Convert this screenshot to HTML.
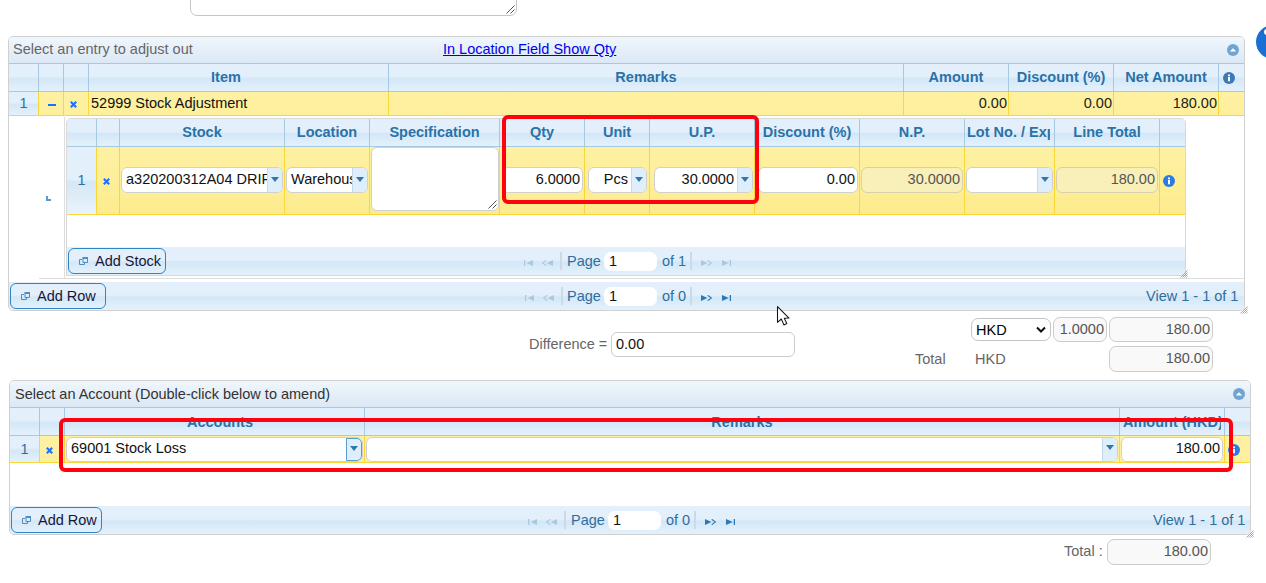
<!DOCTYPE html>
<html>
<head>
<meta charset="utf-8">
<title>Stock Adjustment</title>
<style>
*{box-sizing:border-box;margin:0;padding:0}
html,body{width:1266px;height:583px;overflow:hidden;background:#fff}
body{font-family:"Liberation Sans",sans-serif;font-size:14.5px;color:#222;position:relative}
.a{position:absolute}
.glass{background:linear-gradient(to bottom,#e3f0fb 0,#e3f0fb 46%,#d4e7f7 54%,#e3f1fc 100%)}
.title{background:linear-gradient(to bottom,#f0f6fc 0,#dbe8f5 100%);border-bottom:1px solid #a6c9e2;color:#666}
.hc{position:absolute;top:0;height:28px;border-right:1px solid #a6c9e2;color:#2a72a8;font-weight:bold;text-align:center;line-height:27px;white-space:nowrap;overflow:hidden}
.yc{position:absolute;top:0;background:#fce982 linear-gradient(to bottom,#fef1a3,#fce982) 0 0/100% 100px no-repeat;border-right:1px solid #f9d73a;border-bottom:1px solid #f9d73a;white-space:nowrap;overflow:hidden}
.inp{position:absolute;background:#fff;border:1px solid #d0d0d0;border-radius:6px;height:26px;line-height:22px;white-space:nowrap;overflow:hidden;color:#111}
.dis{background:#f8efb9;border-color:#d6d0b0;color:#555}
.dd{position:absolute;right:0;top:0;bottom:0;width:15px;background:#dfeefb;border-left:1px solid #c5dbec}
.dd:after{content:"";position:absolute;left:3px;top:9px;border-left:4px solid transparent;border-right:4px solid transparent;border-top:5px solid #2e78b0}
.r{text-align:right}
.pg{color:#2e6e9e}
.btn{position:absolute;border:1px solid #2e86c8;border-radius:6px;background:linear-gradient(to bottom,#e3f0fb 0,#e3f0fb 46%,#d4e7f7 54%,#e3f1fc 100%);color:#16163a;height:26px;line-height:24px;white-space:nowrap}
.red{position:absolute;border:4px solid #fe0210;border-radius:6px}
.gin{position:absolute;background:#f9f9f9;border:1px solid #ccc;border-radius:7px;height:25px;line-height:23px;color:#555;text-align:right;padding-right:4px}

.ic{position:absolute}
.sep{position:absolute;width:2px;height:18px;background:#ccd9e6}
.pin{position:absolute;background:#fff;border-radius:7px;height:19px;width:53px;line-height:19px;padding-left:5px;color:#111}
#g2 .dd:after{top:7px}
</style>
</head>
<body>
<!-- top textarea -->
<div class="a" style="left:190px;top:-20px;width:327px;height:36px;border:1px solid #c6c6c6;border-radius:7px;background:#fff"><svg class="ic" style="right:1px;bottom:1px" width="9" height="9"><path d="M8.5 0.5l-8 8M8.5 4.5l-4 4" stroke="#555" stroke-width="1" fill="none"/></svg></div>

<!-- GRID 1 -->
<div id="g1" class="a" style="left:8px;top:36px;width:1237px;height:275px;border:1px solid #d0d0d0;border-radius:5px;overflow:hidden;background:#fff">
  <div class="a title" style="left:0;top:0;width:1235px;height:27px;line-height:24px;padding-left:4px">Select an entry to adjust out</div>
  <div class="a" style="left:434px;top:0;line-height:24px;color:#0000ee;text-decoration:underline">In Location Field Show Qty</div>
  <!-- header -->
  <div class="a glass" style="left:0;top:27px;width:1235px;height:28px;border-bottom:1px solid #a6c9e2">
    <div class="hc" style="left:0;width:30px"></div>
    <div class="hc" style="left:30px;width:25px"></div>
    <div class="hc" style="left:55px;width:25px"></div>
    <div class="hc" style="left:80px;width:300px;padding-right:25px">Item</div>
    <div class="hc" style="left:380px;width:515px">Remarks</div>
    <div class="hc" style="left:895px;width:105px">Amount</div>
    <div class="hc" style="left:1000px;width:105px">Discount (%)</div>
    <div class="hc" style="left:1105px;width:105px">Net Amount</div>
    <div class="hc" style="left:1210px;width:25px;border-right:0"></div>
  </div>
  <!-- row -->
  <div class="a" style="left:0;top:55px;width:1235px;height:24px">
    <div class="yc pg" style="left:0;width:30px;height:24px;text-align:center;line-height:23px;background:linear-gradient(to bottom,#e3f0fb 0,#e3f0fb 46%,#d4e7f7 54%,#e3f1fc 100%)">1</div>
    <div class="yc" style="left:30px;width:25px;height:24px"></div>
    <div class="yc" style="left:55px;width:25px;height:24px"></div>
    <div class="yc" style="left:80px;width:300px;height:24px;line-height:23px;padding-left:2px;color:#111">52999 Stock Adjustment</div>
    <div class="yc" style="left:380px;width:515px;height:24px"></div>
    <div class="yc r" style="left:895px;width:105px;height:24px;line-height:23px;padding-right:1px">0.00</div>
    <div class="yc r" style="left:1000px;width:105px;height:24px;line-height:23px;padding-right:1px">0.00</div>
    <div class="yc r" style="left:1105px;width:105px;height:24px;line-height:23px;padding-right:1px">180.00</div>
    <div class="yc" style="left:1210px;width:25px;height:24px;border-right:0"></div>
  </div>

  <!-- subgrid row -->
  <div class="a" style="left:55px;top:80px;width:1px;height:162px;background:#ddd"></div>
  <div class="a" style="left:30px;top:241px;width:1205px;height:1px;background:#ddd"></div>
  <svg class="a" style="left:37px;top:159px" width="5" height="5"><path d="M1 0v4h4" fill="none" stroke="#5a9ad0" stroke-width="2"/></svg>
  <!-- subgrid -->
  <div id="sg" class="a" style="left:57px;top:81px;width:1120px;height:158px;border:1px solid #d8d8d8;border-radius:5px 5px 0 0;overflow:hidden;background:#fff">
    <div class="a glass" style="left:0;top:0;width:1118px;height:28px;border-bottom:1px solid #a6c9e2">
      <div class="hc" style="left:0;width:30px"></div>
      <div class="hc" style="left:30px;width:23px"></div>
      <div class="hc" style="left:53px;width:165px">Stock</div>
      <div class="hc" style="left:218px;width:85px">Location</div>
      <div class="hc" style="left:303px;width:130px">Specification</div>
      <div class="hc" style="left:433px;width:85px">Qty</div>
      <div class="hc" style="left:518px;width:65px">Unit</div>
      <div class="hc" style="left:583px;width:105px">U.P.</div>
      <div class="hc" style="left:688px;width:105px">Discount (%)</div>
      <div class="hc" style="left:793px;width:105px">N.P.</div>
      <div class="hc" style="left:898px;width:90px;text-align:left;padding-left:2px"><div style="width:83px;overflow:hidden">Lot No. / Expiry</div></div>
      <div class="hc" style="left:988px;width:105px">Line Total</div>
      <div class="hc" style="left:1093px;width:25px;border-right:0"></div>
    </div>
    <div class="a" style="left:0;top:28px;width:1118px;height:68px">
      <div class="yc pg" style="left:0;width:30px;height:68px;text-align:center;line-height:67px;background:linear-gradient(to bottom,#e3f0fb 0,#e3f0fb 48%,#d5e7f6 52%,#e9f3fc 100%)">1</div>
      <div class="yc" style="left:30px;width:23px;height:68px"></div>
      <div class="yc" style="left:53px;width:165px;height:68px"><div class="inp" style="left:1px;top:20px;width:162px;padding-left:4px">a320200312A04 DRIP<div class="dd"></div></div></div>
      <div class="yc" style="left:218px;width:85px;height:68px"><div class="inp" style="left:1px;top:20px;width:82px;padding-left:4px">Warehouse<div class="dd"></div></div></div>
      <div class="yc" style="left:303px;width:130px;height:68px"><div class="inp" style="left:1px;top:0;width:128px;height:64px;border-radius:6px"><svg class="ic" style="right:1px;bottom:1px" width="9" height="9"><path d="M8.5 0.5l-8 8M8.5 4.5l-4 4" stroke="#555" stroke-width="1" fill="none"/></svg></div></div>
      <div class="yc" style="left:433px;width:85px;height:68px"><div class="inp r" style="left:2px;top:20px;width:81px;padding-right:2px">6.0000</div></div>
      <div class="yc" style="left:518px;width:65px;height:68px"><div class="inp r" style="left:3px;top:20px;width:59px;padding-right:18px">Pcs<div class="dd"></div></div></div>
      <div class="yc" style="left:583px;width:105px;height:68px"><div class="inp r" style="left:4px;top:20px;width:99px;padding-right:18px">30.0000<div class="dd"></div></div></div>
      <div class="yc" style="left:688px;width:105px;height:68px"><div class="inp r" style="left:3px;top:20px;width:100px;padding-right:2px">0.00</div></div>
      <div class="yc" style="left:793px;width:105px;height:68px"><div class="inp r dis" style="left:1px;top:20px;width:102px;padding-right:2px">30.0000</div></div>
      <div class="yc" style="left:898px;width:90px;height:68px"><div class="inp" style="left:1px;top:20px;width:87px"><div class="dd"></div></div></div>
      <div class="yc" style="left:988px;width:105px;height:68px"><div class="inp r dis" style="left:1px;top:20px;width:102px;padding-right:2px">180.00</div></div>
      <div class="yc" style="left:1093px;width:25px;height:68px;border-right:0"></div>
    </div>
    <!-- subgrid pager -->
    <div class="a glass" style="left:0;top:128px;width:1118px;height:28px"></div>
  </div>
  <!-- main pager -->
  <div class="a glass" style="left:0;top:245px;width:1235px;height:28px"></div>
</div>

    <svg class="ic" style="left:524px;top:260px" width="10" height="6"><path d="M0 0h1.3v6H0zM9 0v6L2.5 3z" fill="#a9c9e3"/></svg>
    <svg class="ic" style="left:542px;top:260px" width="12" height="6"><path d="M11 0v6L4.6 3z" fill="#a9c9e3"/><path d="M4.3 0.3L0.6 3l3.7 2.7" fill="none" stroke="#a9c9e3" stroke-width="1.1"/></svg>
    <div class="sep" style="left:560px;top:252px"></div>
    <div class="a pg" style="left:567px;top:252px;line-height:19px">Page</div>
    <div class="pin" style="left:604px;top:252px">1</div>
    <div class="a pg" style="left:662px;top:252px;line-height:19px">of 1</div>
    <div class="sep" style="left:690px;top:252px"></div>
    <svg class="ic" style="left:701px;top:260px" width="12" height="6"><path d="M0 0v6L6.4 3z" fill="#a9c9e3"/><path d="M6.7 0.3L10.4 3l-3.7 2.7" fill="none" stroke="#a9c9e3" stroke-width="1.1"/></svg>
    <svg class="ic" style="left:722px;top:260px" width="10" height="6"><path d="M0 0v6L6.8 3z" fill="#a9c9e3"/><path d="M7.7 0H9v6H7.7z" fill="#a9c9e3"/></svg>

    <svg class="ic" style="left:525px;top:295px" width="10" height="6"><path d="M0 0h1.3v6H0zM9 0v6L2.5 3z" fill="#a9c9e3"/></svg>
    <svg class="ic" style="left:543px;top:295px" width="12" height="6"><path d="M11 0v6L4.6 3z" fill="#a9c9e3"/><path d="M4.3 0.3L0.6 3l3.7 2.7" fill="none" stroke="#a9c9e3" stroke-width="1.1"/></svg>
    <div class="sep" style="left:561px;top:287px"></div>
    <div class="a pg" style="left:567px;top:287px;line-height:19px">Page</div>
    <div class="pin" style="left:604px;top:287px">1</div>
    <div class="a pg" style="left:662px;top:287px;line-height:19px">of 0</div>
    <div class="sep" style="left:690px;top:287px"></div>
    <svg class="ic" style="left:701px;top:295px" width="12" height="6"><path d="M0 0v6L6.4 3z" fill="#2e78b4"/><path d="M6.7 0.3L10.4 3l-3.7 2.7" fill="none" stroke="#2e78b4" stroke-width="1.1"/></svg>
    <svg class="ic" style="left:722px;top:295px" width="10" height="6"><path d="M0 0v6L6.8 3z" fill="#2e78b4"/><path d="M7.7 0H9v6H7.7z" fill="#2e78b4"/></svg>

<!-- buttons -->
<div class="btn" style="left:68px;top:248px;width:98px;padding-left:26px">Add Stock</div>
<div class="btn" style="left:10px;top:283px;width:96px;padding-left:26px">Add Row</div>
<div class="a pg" style="left:1146px;top:287px;line-height:19px">View 1 - 1 of 1</div>

<!-- totals -->
<div class="a" style="left:529px;top:334px;line-height:20px;color:#666">Difference =</div>
<div class="a" style="left:611px;top:332px;width:184px;height:25px;border:1px solid #ccc;border-radius:6px;background:#fff;line-height:23px;padding-left:4px;color:#111">0.00</div>
<div class="a" style="left:971px;top:318px;width:80px;height:23px;border:1px solid #c4c4c4;border-radius:7px;background:#fff;line-height:22px;padding-left:4px;color:#000">HKD</div>
<svg class="ic" style="left:1036px;top:326px" width="10" height="8"><path d="M1 1.5l4 4 4-4" fill="none" stroke="#111" stroke-width="2"/></svg>
<div class="gin" style="left:1053px;top:317px;width:54px;padding-right:2px">1.0000</div>
<div class="gin" style="left:1109px;top:317px;width:104px;padding-right:2px">180.00</div>
<div class="gin" style="left:1109px;top:346px;width:104px;height:26px;padding-right:2px">180.00</div>
<div class="a" style="left:915px;top:349px;line-height:20px;color:#666">Total</div>
<div class="a" style="left:975px;top:349px;line-height:20px;color:#666">HKD</div>

<!-- GRID 2 -->
<div id="g2" class="a" style="left:9px;top:380px;width:1242px;height:155px;border:1px solid #d0d0d0;border-radius:5px;overflow:hidden;background:#fff">
  <div class="a title" style="left:0;top:0;width:1240px;height:27px;line-height:27px;padding-left:5px;color:#333">Select an Account (Double-click below to amend)</div>
  <div class="a glass" style="left:0;top:27px;width:1240px;height:28px;border-bottom:1px solid #a6c9e2">
    <div class="hc" style="left:0;width:30px"></div>
    <div class="hc" style="left:30px;width:25px"></div>
    <div class="hc" style="left:55px;width:300px;padding-left:11px;line-height:29px">Accounts</div>
    <div class="hc" style="left:355px;width:755px;line-height:29px">Remarks</div>
    <div class="hc" style="left:1110px;width:105px;line-height:29px;text-align:left;padding-left:3px"><div style="width:98px;overflow:hidden">Amount (HKD)</div></div>
    <div class="hc" style="left:1215px;width:25px;border-right:0"></div>
  </div>
  <div class="a" style="left:0;top:55px;width:1240px;height:27px">
    <div class="yc pg" style="left:0;width:30px;height:27px;text-align:center;line-height:26px;background:linear-gradient(to bottom,#e3f0fb 0,#e3f0fb 46%,#d4e7f7 54%,#e3f1fc 100%)">1</div>
    <div class="yc" style="left:30px;width:25px;height:27px"></div>
    <div class="yc" style="left:55px;width:300px;height:27px"><div class="inp" style="left:1px;top:1px;width:297px;height:25px;line-height:21px;padding-left:4px">69001 Stock Loss<div class="dd" style="border:1px solid #5a9bd0;border-radius:0 5px 5px 0;width:16px"></div></div></div>
    <div class="yc" style="left:355px;width:755px;height:27px"><div class="inp" style="left:1px;top:1px;width:752px;height:25px"><div class="dd"></div></div></div>
    <div class="yc" style="left:1110px;width:105px;height:27px"><div class="inp r" style="left:1px;top:1px;width:102px;height:25px;line-height:21px;padding-right:2px">180.00</div></div>
    <div class="yc" style="left:1215px;width:25px;height:27px;border-right:0"></div>
  </div>
  <div class="a glass" style="left:0;top:125px;width:1240px;height:28px"></div>
</div>

    <svg class="ic" style="left:528px;top:519px" width="10" height="6"><path d="M0 0h1.3v6H0zM9 0v6L2.5 3z" fill="#a9c9e3"/></svg>
    <svg class="ic" style="left:546px;top:519px" width="12" height="6"><path d="M11 0v6L4.6 3z" fill="#a9c9e3"/><path d="M4.3 0.3L0.6 3l3.7 2.7" fill="none" stroke="#a9c9e3" stroke-width="1.1"/></svg>
    <div class="sep" style="left:564px;top:511px"></div>
    <div class="a pg" style="left:571px;top:511px;line-height:19px">Page</div>
    <div class="pin" style="left:608px;top:511px">1</div>
    <div class="a pg" style="left:666px;top:511px;line-height:19px">of 0</div>
    <div class="sep" style="left:694px;top:511px"></div>
    <svg class="ic" style="left:705px;top:519px" width="12" height="6"><path d="M0 0v6L6.4 3z" fill="#2e78b4"/><path d="M6.7 0.3L10.4 3l-3.7 2.7" fill="none" stroke="#2e78b4" stroke-width="1.1"/></svg>
    <svg class="ic" style="left:726px;top:519px" width="10" height="6"><path d="M0 0v6L6.8 3z" fill="#2e78b4"/><path d="M7.7 0H9v6H7.7z" fill="#2e78b4"/></svg>

<div class="btn" style="left:11px;top:507px;width:91px;height:26px;padding-left:26px">Add Row</div>
<div class="a pg" style="left:1153px;top:511px;line-height:19px">View 1 - 1 of 1</div>
<div class="a" style="left:1064px;top:541px;line-height:20px;color:#666">Total :</div>
<div class="gin" style="left:1107px;top:539px;width:104px;height:26px;padding-right:2px">180.00</div>
<svg class="ic" style="left:79px;top:257px" width="9" height="8"><path d="M3 2.5H0.5v5h5V6" fill="none" stroke="#4c8dc4" stroke-width="1"/><path d="M3.5 0h5.5v2H3.5z" fill="#4c8dc4"/><path d="M4 1.5v4h4.5v-4" fill="none" stroke="#4c8dc4" stroke-width="1"/></svg><svg class="ic" style="left:21px;top:292px" width="9" height="8"><path d="M3 2.5H0.5v5h5V6" fill="none" stroke="#4c8dc4" stroke-width="1"/><path d="M3.5 0h5.5v2H3.5z" fill="#4c8dc4"/><path d="M4 1.5v4h4.5v-4" fill="none" stroke="#4c8dc4" stroke-width="1"/></svg><svg class="ic" style="left:22px;top:516px" width="9" height="8"><path d="M3 2.5H0.5v5h5V6" fill="none" stroke="#4c8dc4" stroke-width="1"/><path d="M3.5 0h5.5v2H3.5z" fill="#4c8dc4"/><path d="M4 1.5v4h4.5v-4" fill="none" stroke="#4c8dc4" stroke-width="1"/></svg>
<div class="ic" style="left:48px;top:104px;width:8px;height:2px;background:#1f70ff"></div><svg class="ic" style="left:70px;top:101px" width="7" height="7"><path d="M0.8 0.8L6.2 6.2M6.2 0.8L0.8 6.2" fill="none" stroke="#1f70ff" stroke-width="2.1"/></svg><svg class="ic" style="left:103px;top:178px" width="7" height="7"><path d="M0.8 0.8L6.2 6.2M6.2 0.8L0.8 6.2" fill="none" stroke="#1f70ff" stroke-width="2.1"/></svg><svg class="ic" style="left:46px;top:447px" width="7" height="7"><path d="M0.8 0.8L6.2 6.2M6.2 0.8L0.8 6.2" fill="none" stroke="#1f70ff" stroke-width="2.1"/></svg><svg class="ic" style="left:1223px;top:72px" width="12" height="12"><circle cx="6" cy="6" r="6" fill="#3b7ab2"/><path d="M5 5h2v4.2H5z M5 2.6h2v1.6H5z" fill="#fff"/></svg><svg class="ic" style="left:1163px;top:175px" width="12" height="12"><circle cx="6" cy="6" r="6" fill="#2a7be4"/><path d="M5 5h2v4.2H5z M5 2.6h2v1.6H5z" fill="#fff"/></svg><svg class="ic" style="left:1228px;top:444px" width="12" height="12"><circle cx="6" cy="6" r="6" fill="#2a7be4"/><path d="M5 5h2v4.2H5z M5 2.6h2v1.6H5z" fill="#fff"/></svg><svg class="ic" style="left:1227px;top:44px" width="12" height="12"><circle cx="6" cy="6" r="6" fill="#70a5d1"/><path d="M2.8 7.6L6 4.2l3.2 3.4z" fill="#fff"/></svg><svg class="ic" style="left:1233px;top:388px" width="12" height="12"><circle cx="6" cy="6" r="6" fill="#70a5d1"/><path d="M2.8 7.6L6 4.2l3.2 3.4z" fill="#fff"/></svg><div class="ic" style="left:1256px;top:25px;width:34px;height:34px;border-radius:17px;background:#1b6fd3"></div><div class="ic" style="left:1264px;top:29px;width:6px;height:6px;border-radius:3px;background:#fff"></div>
<svg class="ic" style="left:1180px;top:270px" width="8" height="8"><path d="M7.5 0.5l-7 7M7.5 2.5l-5 5M7.5 4.5l-3 3M7.5 6.5l-1 1" stroke="#7aa7d4" stroke-width="0.9" fill="none"/></svg><svg class="ic" style="left:1240px;top:306px" width="8" height="8"><path d="M7.5 0.5l-7 7M7.5 2.5l-5 5M7.5 4.5l-3 3M7.5 6.5l-1 1" stroke="#7aa7d4" stroke-width="0.9" fill="none"/></svg><svg class="ic" style="left:1246px;top:530px" width="8" height="8"><path d="M7.5 0.5l-7 7M7.5 2.5l-5 5M7.5 4.5l-3 3M7.5 6.5l-1 1" stroke="#7aa7d4" stroke-width="0.9" fill="none"/></svg>
<div class="red" style="left:502px;top:115px;width:257px;height:89px"></div>
<div class="red" style="left:59px;top:418px;width:1174px;height:54px"></div>
<svg class="ic" style="left:775px;top:304px" width="18" height="24"><path d="M2.5 2.6V18.3L6.3 15l2.6 5.9 2.9-1.3-2.5-5.4 4.7-.1z" fill="#fff" stroke="#111" stroke-width="1.05" stroke-linejoin="round"/></svg>
</body>
</html>
